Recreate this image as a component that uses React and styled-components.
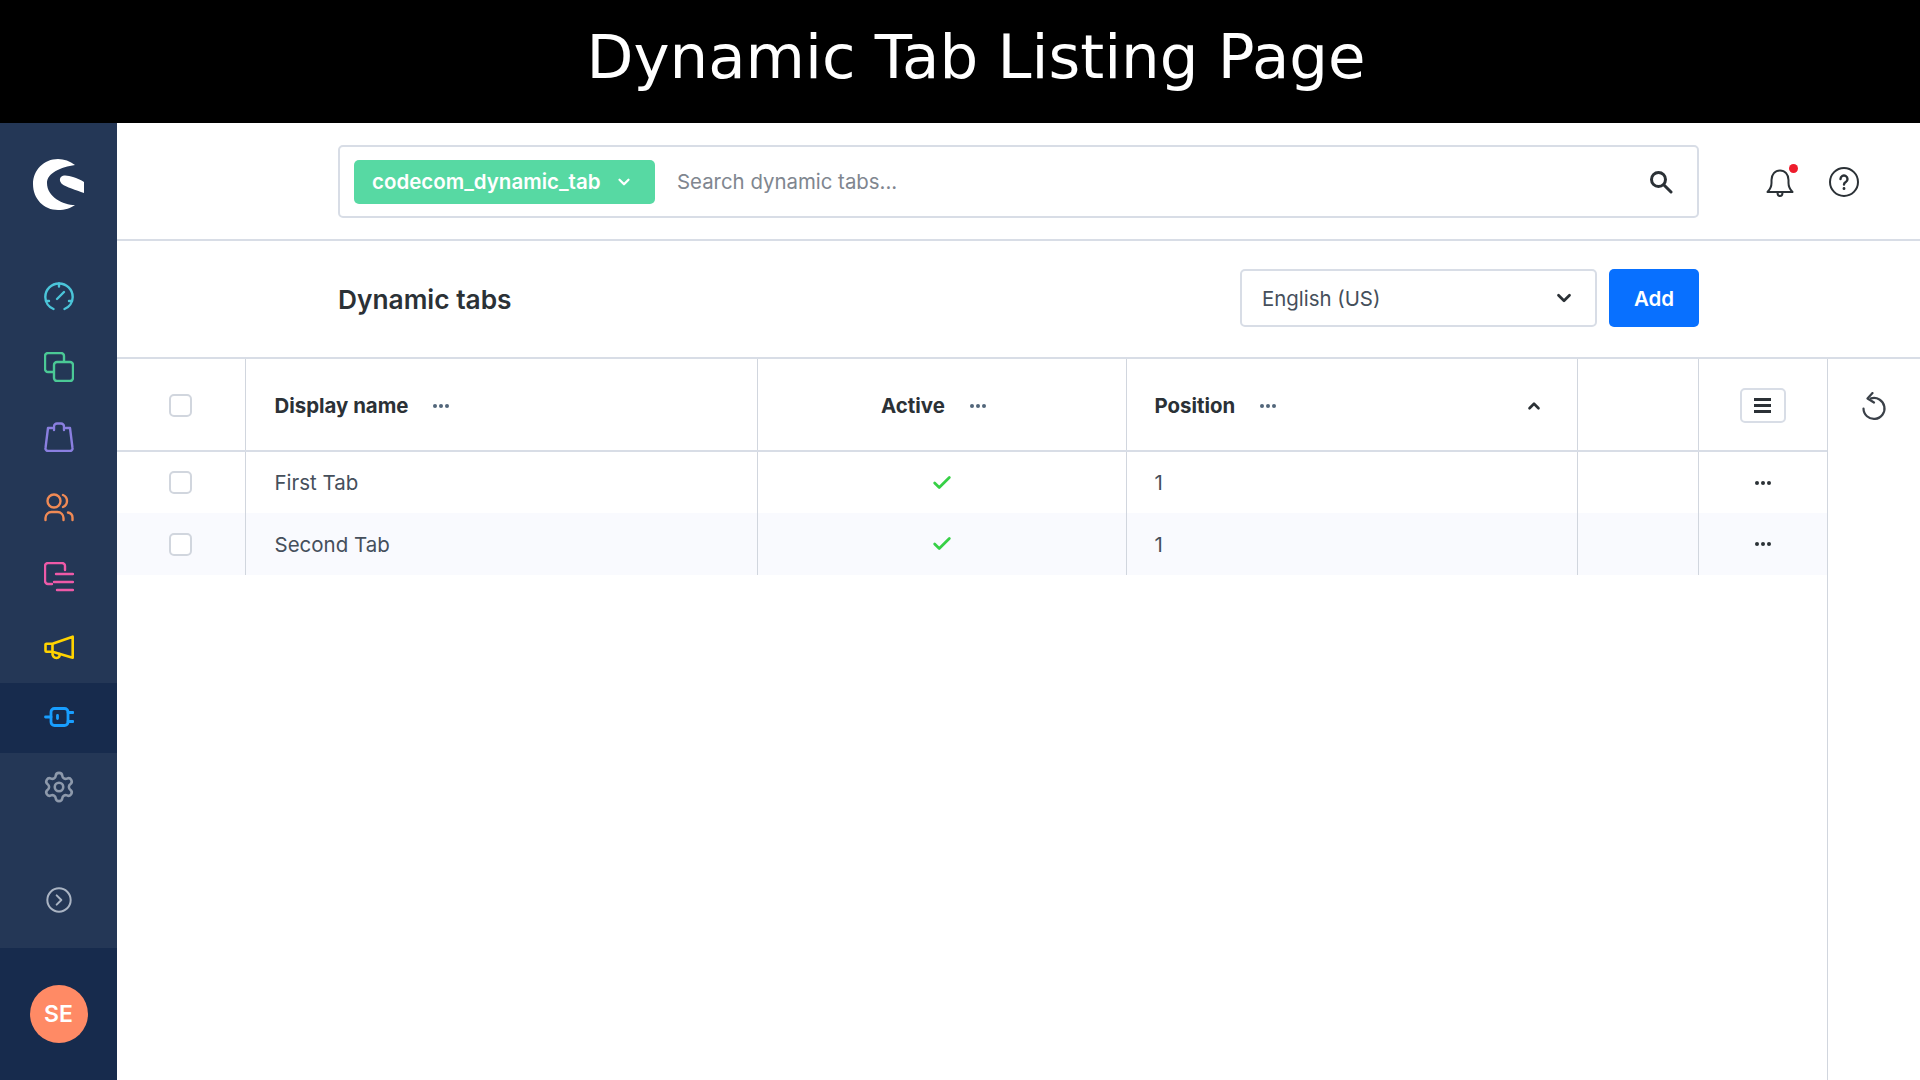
import styled, { createGlobalStyle } from "styled-components";
import { Check, ChevronDown, ChevronUp, CircleChevronRight, Settings } from "lucide-react";

const GlobalStyle = createGlobalStyle`
  html, body {
    margin: 0;
    height: 100%;
    background: #fff;
    overflow: hidden;
  }
  * {
    box-sizing: border-box;
  }
`;

const Page = styled.div`
  width: 1920px;
  height: 1080px;
  display: flex;
  flex-direction: column;
  font-family: Inter, "Liberation Sans", sans-serif;
  color: #2b3136;
`;

const Banner = styled.header`
  height: 123px;
  flex: none;
  background: #000;
  color: #fff;
  font-family: "DejaVu Sans", sans-serif;
  font-size: 61px;
  display: flex;
  align-items: center;
  justify-content: center;
  padding: 0 0 11px 32px;
`;

const Body = styled.div`
  flex: 1;
  display: flex;
  min-height: 0;
`;

const Sidebar = styled.aside`
  width: 117px;
  flex: none;
  background: #243756;
  display: flex;
  flex-direction: column;
`;

const LogoBox = styled.div`
  height: 140px;
  flex: none;
  display: flex;
  justify-content: center;
  padding-top: 36px;
`;

const NavList = styled.nav`
  display: flex;
  flex-direction: column;
`;

const NavItem = styled.div`
  height: 70px;
  padding-bottom: 3px;
  display: flex;
  align-items: center;
  justify-content: center;
  color: ${(p) => p.$color};
  background: ${(p) => (p.$active ? "#172b4d" : "transparent")};
`;

const ExpandRow = styled.div`
  flex: 1;
  display: flex;
  align-items: flex-start;
  justify-content: center;
  padding-top: 63px;
  color: #aab4c3;
`;

const SidebarFooter = styled.div`
  height: 132px;
  flex: none;
  background: #172b4d;
  display: flex;
  align-items: center;
  justify-content: center;
`;

const Avatar = styled.div`
  width: 58px;
  height: 58px;
  border-radius: 50%;
  background: #ff8a65;
  color: #fff;
  font-size: 23px;
  font-weight: 600;
  display: flex;
  align-items: center;
  justify-content: center;
`;

const Content = styled.main`
  flex: 1;
  min-width: 0;
  display: flex;
  flex-direction: column;
`;

const TopBar = styled.div`
  height: 118px;
  flex: none;
  border-bottom: 2px solid #d8dde6;
  display: flex;
  align-items: flex-start;
  padding: 22px 0 0 221px;
`;

const SearchBox = styled.div`
  width: 1361px;
  height: 73px;
  border: 2px solid #d8dde6;
  border-radius: 5px;
  display: flex;
  align-items: center;
  padding: 0 24px 0 14px;
`;

const EntityTag = styled.div`
  width: 301px;
  height: 44px;
  flex: none;
  border-radius: 5px;
  background: #57d9a3;
  color: #fff;
  font-size: 20.5px;
  font-weight: 600;
  display: flex;
  align-items: center;
  justify-content: space-between;
  padding: 0 22px 0 18px;
`;

const SearchText = styled.span`
  flex: 1;
  margin-left: 22px;
  font-size: 20.4px;
  color: #80868f;
`;

const IconGroup = styled.div`
  display: flex;
  align-items: center;
  gap: 34px;
  height: 73px;
  margin-left: 66px;
`;

const BellWrap = styled.div`
  position: relative;
  display: flex;
`;

const RedDot = styled.span`
  position: absolute;
  top: -3px;
  right: -3px;
  width: 9px;
  height: 9px;
  border-radius: 50%;
  background: #ee1c2c;
`;

const SmartBar = styled.div`
  height: 116px;
  flex: none;
  display: flex;
  align-items: center;
  padding: 0 221px 2px 221px;
`;

const Title = styled.h1`
  flex: 1;
  margin: 2px 0 0;
  font-size: 26.3px;
  font-weight: 600;
`;

const LanguageSelect = styled.div`
  width: 357px;
  height: 58px;
  border: 2px solid #d8dde6;
  border-radius: 5px;
  display: flex;
  align-items: center;
  justify-content: space-between;
  padding: 0 20px;
  font-size: 20.4px;
  color: #454f5b;
`;

const AddButton = styled.button`
  width: 90px;
  height: 58px;
  margin-left: 12px;
  border: 0;
  border-radius: 5px;
  background: #0870ff;
  color: #fff;
  font-family: inherit;
  font-size: 20.5px;
  font-weight: 600;
`;

const ListArea = styled.div`
  flex: 1;
  min-height: 0;
  display: flex;
  border-top: 2px solid #d8dde6;
`;

const Table = styled.table`
  width: 1710px;
  height: fit-content;
  flex: none;
  border-collapse: collapse;
  table-layout: fixed;
`;

const Row = styled.tr`
  height: 62px;
  background: ${(p) => (p.$striped ? "#f9fafe" : "#fff")};
`;

const HeadRow = styled.tr`
  height: 92px;
  border-bottom: 2px solid #d8dde6;
`;

const HeadCell = styled.th`
  padding: 2px ${(p) => p.$padRight || 0}px 0 ${(p) => p.$padLeft || 0}px;
  border-left: 1px solid #d1d6de;
  font-size: 20.4px;
  font-weight: 700;
  text-align: left;

  &:first-child {
    border-left: 0;
  }
`;

const Cell = styled.td`
  padding: 0 0 0 ${(p) => p.$padLeft || 0}px;
  border-left: 1px solid #d1d6de;
  font-size: 20.5px;
  color: #454f5b;

  &:first-child {
    border-left: 0;
  }
`;

const Inline = styled.div`
  display: flex;
  align-items: center;
  justify-content: ${(p) => p.$justify || "flex-start"};
  gap: ${(p) => p.$gap || 0}px;
`;

const Checkbox = styled.span`
  display: block;
  width: 23px;
  height: 23px;
  border: 2px solid #d1d6de;
  border-radius: 5px;
  background: #fff;
`;

const Dots = styled.span`
  display: flex;
  gap: 2px;

  i {
    width: 4px;
    height: 4px;
    border-radius: 50%;
    background: ${(p) => p.$color || "#52667a"};
  }
`;

const ColumnButton = styled.div`
  width: 46px;
  height: 35px;
  border: 2px solid #d8dde6;
  border-radius: 5px;
  display: flex;
  flex-direction: column;
  align-items: center;
  justify-content: center;
  gap: 3px;

  i {
    width: 17px;
    height: 3px;
    background: #2b3136;
  }
`;

const ResetColumn = styled.div`
  flex: 1;
  border-left: 1px solid #d1d6de;
  display: flex;
  justify-content: center;
  padding: 33px 0 0 0;
  color: #3a4048;
`;

const Icon = ({ size = 30, width = 2.4, children }) => (
  <svg
    width={size}
    height={size}
    viewBox="0 0 30 30"
    fill="none"
    stroke="currentColor"
    strokeWidth={width}
    strokeLinecap="round"
    strokeLinejoin="round"
  >
    {children}
  </svg>
);

const Logo = () => (
  <svg width="51" height="51" viewBox="0 0 51 51" fill="#fff">
    <path d="M42 6C37 2 31 0 25 0 11 0 0 11 0 25c0 15 11 26 25 26 7 0 13-2 17-5-12 0-28-8-28-22 0-10 14-16 28-18Z" />
    <path d="M28 18c3-3 8-1 12 0s8 3 11 5v11c-8-3-18-6-22-9-2-2-3-5-1-7Z" />
  </svg>
);

const DashboardIcon = () => (
  <Icon>
    <path d="M9.500 27C4.700 25 1.300 20.300 1.300 15 1.300 7.500 7.500 1.500 15 1.500S28.700 7.500 28.700 15c0 5.300-3.400 10-8.200 12" />
    <path d="M15 1.500v3M2 19h3M25 19h3M13 17l7-7" />
  </Icon>
);

const CopyIcon = () => (
  <Icon>
    <path d="M9 20H4a3 3 0 0 1-3-3V4a3 3 0 0 1 3-3h13a3 3 0 0 1 3 3v5" />
    <rect x="10" y="10" width="19" height="19" rx="3" />
  </Icon>
);

const BagIcon = () => (
  <Icon>
    <path d="M8 6H4L1.500 26a2.500 2.500 0 0 0 2.500 3h22a2.500 2.500 0 0 0 2.500-3L26 6h-4" />
    <path d="M10 8V4.500A3 3 0 0 1 13 1.500h4a3 3 0 0 1 3 3V8" />
  </Icon>
);

const UsersIcon = () => (
  <Icon>
    <circle cx="10" cy="9" r="6.500" />
    <path d="M1.500 28v-2a6 6 0 0 1 6-6h6a6 6 0 0 1 6 6v2" />
    <path d="M19 3a6.500 6.500 0 0 1 0 12M24 20.500a5.500 5.500 0 0 1 4.500 5.500v2" />
  </Icon>
);

const ContentIcon = () => (
  <Icon>
    <path d="M21 8V4a3 3 0 0 0-3-3H4a3 3 0 0 0-3 3v15a3 3 0 0 0 3 3h4" />
    <path d="M12 12h17M10 20h19M13 28h16" />
  </Icon>
);

const MarketingIcon = () => (
  <Icon width={2.600}>
    <path d="M8.500 11.700 28.700 4.700v21L8.500 19.700H2.500a1 1 0 0 1-1-1v-6a1 1 0 0 1 1-1h6ZM8.500 11.700v8" />
    <path d="M8.500 20c-.5 4 1.500 6 4 6s3.500-2 3-4" />
  </Icon>
);

const PluginIcon = () => (
  <Icon width={2.800}>
    <rect x="7" y="6.500" width="17" height="17" rx="3.500" />
    <path d="M1.500 15H7M24 10.500h5M24 19.500h5M13.500 13.500v3" />
  </Icon>
);

const SearchIcon = () => (
  <svg
    width="24"
    height="24"
    viewBox="0 0 24 24"
    fill="none"
    stroke="#2b3136"
    strokeWidth="3"
    strokeLinecap="round"
  >
    <circle cx="9.500" cy="9.500" r="7" />
    <path d="m15 15 7 7" />
  </svg>
);

const BellIcon = () => (
  <Icon width={2}>
    <path d="M2.500 25c2.500-2.500 4-5 4-9v-3c0-5.500 3.500-9.500 8.500-9.500s8.500 4 8.500 9.500v3c0 4 1.500 6.500 4 9H2.500Z" />
    <path d="M12.500 25.500c0 2.500 1 3.500 2.500 3.500s2.500-1 2.500-3.500" />
  </Icon>
);

const HelpIcon = () => (
  <Icon width={2}>
    <circle cx="15" cy="15" r="14" />
    <path d="M11.500 12a3.500 3.500 0 1 1 5.300 3c-1.200.7-1.800 1.200-1.800 2.500" strokeWidth="2.400" />
    <path d="M15 21.500v.2" strokeWidth="2.800" />
  </Icon>
);

const UndoIcon = () => (
  <Icon width={2.200}>
    <path d="M12 6.400A10.500 10.500 0 1 1 4.500 16.500" />
    <path d="M13.500 1 8.500 6.500l6.500 4" />
  </Icon>
);

const TripleDots = ({ color }) => (
  <Dots $color={color}>
    <i />
    <i />
    <i />
  </Dots>
);

const navItems = [
  { color: "#4bc5d9", icon: <DashboardIcon /> },
  { color: "#4bc996", icon: <CopyIcon /> },
  { color: "#8a7fe0", icon: <BagIcon /> },
  { color: "#f08a55", icon: <UsersIcon /> },
  { color: "#ee5aa8", icon: <ContentIcon /> },
  { color: "#ffd300", icon: <MarketingIcon /> },
  { color: "#189eff", icon: <PluginIcon />, active: true },
  { color: "#8d99ab", icon: <Settings size={34} strokeWidth={1.800} /> },
];

const rows = [
  { name: "First Tab", position: 1 },
  { name: "Second Tab", position: 1, striped: true },
];

export default function App() {
  return (
    <Page>
      <GlobalStyle />
      <Banner>Dynamic Tab Listing Page</Banner>
      <Body>
        <Sidebar>
          <LogoBox>
            <Logo />
          </LogoBox>
          <NavList>
            {navItems.map((item) => (
              <NavItem key={item.color} $color={item.color} $active={item.active}>
                {item.icon}
              </NavItem>
            ))}
          </NavList>
          <ExpandRow>
            <CircleChevronRight size={28} strokeWidth={1.700} />
          </ExpandRow>
          <SidebarFooter>
            <Avatar>SE</Avatar>
          </SidebarFooter>
        </Sidebar>
        <Content>
          <TopBar>
            <SearchBox>
              <EntityTag>
                codecom_dynamic_tab
                <ChevronDown size={18} strokeWidth={3} />
              </EntityTag>
              <SearchText>Search dynamic tabs...</SearchText>
              <SearchIcon />
            </SearchBox>
            <IconGroup>
              <BellWrap>
                <BellIcon />
                <RedDot />
              </BellWrap>
              <HelpIcon />
            </IconGroup>
          </TopBar>
          <SmartBar>
            <Title>Dynamic tabs</Title>
            <LanguageSelect>
              English (US)
              <ChevronDown size={22} strokeWidth={3} color="#2b3136" />
            </LanguageSelect>
            <AddButton>Add</AddButton>
          </SmartBar>
          <ListArea>
            <Table>
              <colgroup>
                <col style={{ width: 128 }} />
                <col style={{ width: 512 }} />
                <col style={{ width: 369 }} />
                <col style={{ width: 451 }} />
                <col style={{ width: 121 }} />
                <col style={{ width: 129 }} />
              </colgroup>
              <thead>
                <HeadRow>
                  <HeadCell>
                    <Inline $justify="center">
                      <Checkbox />
                    </Inline>
                  </HeadCell>
                  <HeadCell $padLeft={29}>
                    <Inline $gap={25}>
                      Display name
                      <TripleDots />
                    </Inline>
                  </HeadCell>
                  <HeadCell $padRight={16}>
                    <Inline $justify="center" $gap={25}>
                      Active
                      <TripleDots />
                    </Inline>
                  </HeadCell>
                  <HeadCell $padLeft={28} $padRight={34}>
                    <Inline $justify="space-between">
                      <Inline $gap={25}>
                        Position
                        <TripleDots />
                      </Inline>
                      <ChevronUp size={18} strokeWidth={3.500} />
                    </Inline>
                  </HeadCell>
                  <HeadCell />
                  <HeadCell>
                    <Inline $justify="center">
                      <ColumnButton>
                        <i />
                        <i />
                        <i />
                      </ColumnButton>
                    </Inline>
                  </HeadCell>
                </HeadRow>
              </thead>
              <tbody>
                {rows.map((row) => (
                  <Row key={row.name} $striped={row.striped}>
                    <Cell>
                      <Inline $justify="center">
                        <Checkbox />
                      </Inline>
                    </Cell>
                    <Cell $padLeft={29}>{row.name}</Cell>
                    <Cell>
                      <Inline $justify="center">
                        <Check size={22} strokeWidth={3} color="#37d046" />
                      </Inline>
                    </Cell>
                    <Cell $padLeft={28}>{row.position}</Cell>
                    <Cell />
                    <Cell>
                      <Inline $justify="center">
                        <TripleDots color="#2b3136" />
                      </Inline>
                    </Cell>
                  </Row>
                ))}
              </tbody>
            </Table>
            <ResetColumn>
              <UndoIcon />
            </ResetColumn>
          </ListArea>
        </Content>
      </Body>
    </Page>
  );
}
